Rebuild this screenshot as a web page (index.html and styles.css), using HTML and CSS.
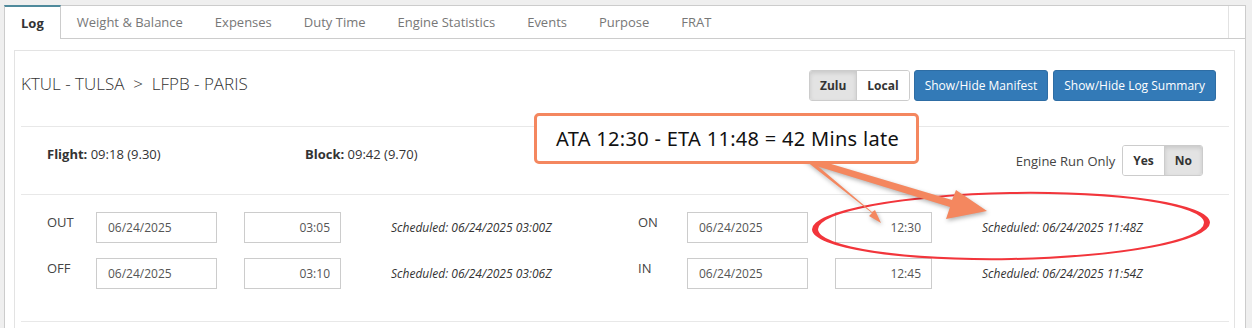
FILE: index.html
```html
<!DOCTYPE html>
<html lang="en">
<head>
  <meta charset="UTF-8" />
  <title>Flight Log</title>
  <link rel="stylesheet" href="styles.css">
</head>
<body>
  <div class="tabs">
    <a class="tab active">Log</a>
    <a class="tab">Weight &amp; Balance</a>
    <a class="tab">Expenses</a>
    <a class="tab">Duty Time</a>
    <a class="tab">Engine Statistics</a>
    <a class="tab">Events</a>
    <a class="tab">Purpose</a>
    <a class="tab">FRAT</a>
    <span class="tab-end"></span>
  </div>

  <div class="panel">
    <div class="card">
      <div class="card-head">
        <h1 class="route">KTUL - TULSA &nbsp;&gt;&nbsp; LFPB - PARIS</h1>
        <div class="actions">
          <div class="toggle">
            <button class="on">Zulu</button>
            <button>Local</button>
          </div>
          <button class="btn-blue">Show/Hide Manifest</button>
          <button class="btn-blue">Show/Hide Log Summary</button>
        </div>
      </div>

      <div class="totals">
        <div class="total flight"><strong>Flight:</strong> 09:18 (9.30)</div>
        <div class="total"><strong>Block:</strong> 09:42 (9.70)</div>
        <div class="engine-run">
          <span>Engine Run Only</span>
          <div class="toggle">
            <button>Yes</button>
            <button class="on">No</button>
          </div>
        </div>
      </div>

      <div class="times">
        <div class="time-row">
          <div class="leg">
            <span class="leg-label">OUT</span>
            <input class="date" type="text" value="06/24/2025">
            <input class="time" type="text" value="03:05">
            <em class="sched">Scheduled: 06/24/2025 03:00Z</em>
          </div>
          <div class="leg">
            <span class="leg-label">ON</span>
            <input class="date" type="text" value="06/24/2025">
            <input class="time" type="text" value="12:30">
            <em class="sched">Scheduled: 06/24/2025 11:48Z</em>
          </div>
        </div>
        <div class="time-row">
          <div class="leg">
            <span class="leg-label">OFF</span>
            <input class="date" type="text" value="06/24/2025">
            <input class="time" type="text" value="03:10">
            <em class="sched">Scheduled: 06/24/2025 03:06Z</em>
          </div>
          <div class="leg">
            <span class="leg-label">IN</span>
            <input class="date" type="text" value="06/24/2025">
            <input class="time" type="text" value="12:45">
            <em class="sched">Scheduled: 06/24/2025 11:54Z</em>
          </div>
        </div>
      </div>
    </div>
  </div>

  <!-- annotation drawn over the screenshot -->
  <svg class="marks" width="1252" height="328" viewBox="0 0 1252 328">
    <path fill="#f2353b" fill-rule="evenodd" transform="rotate(-1 1011 226)"
      d="M812,226 a199,34 0 1,0 398,0 a199,34 0 1,0 -398,0 Z
         M818,226 a193,32 0 1,0 386,0 a193,32 0 1,0 -386,0 Z"/>
    <g class="arrows" fill="#f4875f">
      <polygon points="802,158 806,161 872,213 869,216 881,223 875,210 872,212 807,157"/>
      <polygon points="811,158 813,165 950,207 946,219 987,211 956,190 952,200"/>
    </g>
  </svg>
  <div class="note">ATA 12:30 - ETA 11:48 = 42 Mins late</div>
</body>
</html>
```

FILE: styles.css
```css
body {
  margin: 0;
  background-color: #efefef;
  font-family: "Open Sans", Arial, sans-serif;
  font-size: 13px;
  color: #333;
  width: 1252px;
  height: 328px;
  overflow: hidden;
  position: relative;
}
.tabs {
  display: flex;
  margin: 5px 6px 0 4px;
  height: 32px;
  background: white;
  border: 1px solid #ccc;
}
.tab {
  padding: 0 16px;
  line-height: 32px;
  color: #777;
  white-space: nowrap;
}
.tab.active {
  margin: -1px 0 -1px -1px;
  padding: 0 16px;
  line-height: 32px;
  border-top: 2px solid #4f8a9c;
  border-left: 1px solid #ccc;
  border-right: 1px solid #ccc;
  background: white;
  color: #333;
  font-weight: bold;
}
.tab-end {
  margin-left: auto;
  width: 16px;
  border-left: 1px solid #e2e2e2;
}
.panel {
  box-sizing: border-box;
  margin: 0 6px 0 4px;
  padding: 11px 10px 0 9px;
  background: white;
  border-left: 1px solid #ccc;
  border-right: 1px solid #ccc;
  height: 289px;
}
.card {
  box-sizing: border-box;
  border: 1px solid #e3e3e3;
  border-bottom: none;
  padding: 0 5px 0 6px;
  height: 100%;
  overflow: hidden;
}
.card-head {
  display: flex;
  justify-content: space-between;
  align-items: flex-start;
  padding: 19px 13px 25px 0;
  border-bottom: 1px solid #e8e8e8;
}
.route {
  margin: 2px 0 0;
  font-size: 17px;
  font-weight: 300;
  color: #333;
  white-space: pre;
}
.actions {
  display: flex;
  gap: 4px;
}
.toggle {
  display: flex;
  border: 1px solid #ccc;
  border-radius: 3px;
  overflow: hidden;
}
.toggle button {
  height: 29px;
  padding: 0 10px;
  border: none;
  background: white;
  font-family: "Open Sans", Arial, sans-serif;
  font-size: 12px;
  font-weight: bold;
  color: #333;
}
.toggle button + button {
  border-left: 1px solid #ccc;
}
.toggle button.on {
  background: #e3e3e3;
  box-shadow: inset 0 2px 4px rgba(0,0,0,0.12);
}
.btn-blue {
  height: 31px;
  padding: 0 10px;
  background-color: #337ab7;
  border: 1px solid #2e6da4;
  border-radius: 3px;
  color: white;
  font-family: "Open Sans", Arial, sans-serif;
  font-size: 12px;
}
.btn-blue + .btn-blue {
  margin-left: 1px;
}
.totals {
  display: flex;
  align-items: flex-start;
  padding: 18px 26px 18px 26px;
  border-bottom: 1px solid #e8e8e8;
}
.total {
  line-height: 18px;
}
.total.flight {
  width: 258px;
}
.engine-run {
  margin-left: auto;
  display: flex;
  align-items: center;
  gap: 7px;
  color: #444;
}
.engine-run .toggle button {
  height: 29px;
  padding: 0 10px;
}
.times {
  padding: 17px 0 32px 26px;
  border-bottom: 1px solid #e8e8e8;
  display: flex;
  flex-direction: column;
  gap: 15px;
}
.time-row {
  display: flex;
}
.leg {
  flex: 0 0 591px;
  display: flex;
  align-items: flex-start;
}
.leg-label {
  width: 49px;
  line-height: 20px;
  color: #444;
}
input {
  box-sizing: border-box;
  height: 31px;
  border: 1px solid #ccc;
  padding: 0 11px;
  font-family: "Open Sans", Arial, sans-serif;
  font-size: 12px;
  color: #555;
}
input.date {
  width: 121px;
  margin-right: 27px;
}
input.time {
  width: 97px;
  margin-right: 50px;
  text-align: right;
  padding-right: 10px;
}
.sched {
  line-height: 31px;
  font-size: 12px;
  color: #333;
  white-space: nowrap;
}
.marks {
  position: absolute;
  left: 0;
  top: 0;
  pointer-events: none;
}
.arrows {
  filter: drop-shadow(1px 2px 2px rgba(0,0,0,0.3));
}
.note {
  position: absolute;
  left: 534px;
  top: 113px;
  box-sizing: border-box;
  width: 385px;
  height: 51px;
  padding-left: 19px;
  background: white;
  border: 3px solid #f4875f;
  border-radius: 5px;
  font-family: "Noto Sans", sans-serif;
  font-size: 20px;
  letter-spacing: 0.3px;
  line-height: 45px;
  color: #111;
}
```
